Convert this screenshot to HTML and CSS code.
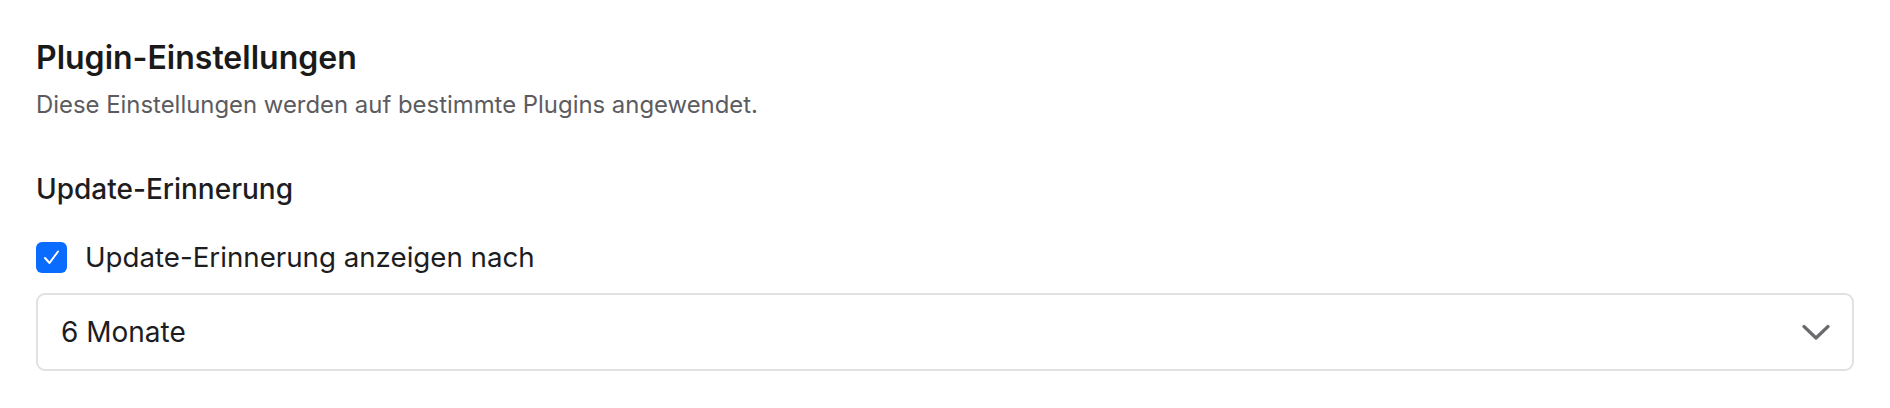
FILE: index.html
```html
<!DOCTYPE html>
<html lang="de">
<head>
<meta charset="utf-8">
<title>Plugin-Einstellungen</title>
<link rel="stylesheet" href="styles.css">
</head>
<body>
<main class="settings">
  <h1 class="title">Plugin-Einstellungen</h1>
  <p class="desc">Diese Einstellungen werden auf bestimmte Plugins angewendet.</p>
  <h2 class="subtitle">Update-Erinnerung</h2>
  <label class="check-row">
    <span class="checkbox">
      <svg width="31" height="31" viewBox="0 0 31 31"><polyline points="9,16 13.5,21 22,9.5" fill="none" stroke="#fff" stroke-width="2" stroke-linecap="round" stroke-linejoin="round"/></svg>
    </span>
    <span class="check-label">Update-Erinnerung anzeigen nach</span>
  </label>
  <div class="select">
    <span class="select-value">6 Monate</span>
    <svg class="chevron" width="28" height="17" viewBox="0 0 28 17"><polyline points="2,2.5 14,14 26,2.5" fill="none" stroke="#6a6a6f" stroke-width="3.2" stroke-linecap="round" stroke-linejoin="round"/></svg>
  </div>
</main>
</body>
</html>
```
FILE: styles.css
```css
html, body {
  margin: 0;
  padding: 0;
  background: #ffffff;
}
body {
  font-family: Inter, "Noto Sans", sans-serif;
  color: #1d1d1f;
}
.settings {
  display: flex;
  flex-direction: column;
  padding: 38px 36px 0 36px;
}
.title {
  margin: 0;
  font-size: 32px;
  line-height: 40px;
  font-weight: 600;
  color: #1a1a1a;
}
.desc {
  margin: 11px 0 0 0;
  font-size: 23.9px;
  line-height: 32px;
  font-weight: 400;
  color: #5c5c60;
}
.subtitle {
  margin: 50px 0 0 0;
  font-size: 28px;
  line-height: 36px;
  font-weight: 500;
  color: #1d1d1f;
}
.check-row {
  display: flex;
  align-items: center;
  gap: 18px;
  margin-top: 35px;
  height: 31px;
}
.checkbox {
  width: 31px;
  height: 31px;
  border-radius: 6px;
  background: #0a6cff;
  display: flex;
  flex: none;
}
.check-label {
  font-size: 27.7px;
  line-height: 31px;
  color: #1d1d1f;
}
.select {
  margin-top: 20px;
  height: 78px;
  box-sizing: border-box;
  border: 2px solid #e1e1e3;
  border-radius: 9px;
  display: flex;
  align-items: center;
  justify-content: space-between;
  padding: 0 22px 0 23px;
}
.select-value {
  font-size: 28px;
  line-height: 31px;
  color: #1d1d1f;
}
.chevron {
  flex: none;
}
```
